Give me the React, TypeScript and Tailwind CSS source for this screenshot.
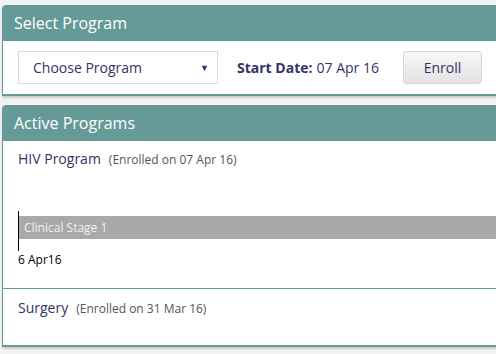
import React from "react";

export default function App() {
  const font = { fontFamily: '"Open Sans", "Noto Sans", sans-serif' };
  return (
    <div className="h-[354px] w-[496px] overflow-hidden bg-[#f3f3f3] pl-[2px] pt-[5px]" style={font}>
      {/* Select Program panel */}
      <div className="w-[520px] overflow-hidden rounded-tl-[4px] border-b-2 border-l border-[#669a98] bg-white shadow-[0_2px_2px_rgba(0,0,0,0.15)]">
        <div className="flex h-[36px] items-center bg-[#669a98] pl-[11px] text-[16px] text-white">
          Select Program
        </div>
        <div className="flex h-[53px] items-start pl-[15px] pt-[10px]">
          <div className="relative flex h-[33px] w-[200px] items-center border border-[#d9d9d9] bg-white pl-[14px] text-[14px] text-[#333366]">
            Choose Program
            <span className="absolute right-[8px] top-[9px] text-[9px] text-[#333366]">▼</span>
          </div>
          <div className="ml-[19px] flex h-[33px] items-center text-[14px] text-[#333366]">
            <span className="font-bold">Start Date:</span>
            <span className="ml-[4px]">07 Apr 16</span>
          </div>
          <div className="ml-[24px] flex h-[33px] w-[79px] items-center justify-center rounded-[3px] border border-[#d6d6d6] bg-gradient-to-b from-[#f8f8f8] to-[#e2e2e2] text-[14px] text-[#333366]">
            Enroll
          </div>
        </div>
      </div>

      {/* Active Programs panel */}
      <div className="mt-[9px] w-[520px] overflow-hidden rounded-tl-[4px] border-b-2 border-l border-[#669a98] bg-white shadow-[0_2px_2px_rgba(0,0,0,0.15)]">
        <div className="flex h-[36px] items-center bg-[#669a98] pl-[11px] text-[16px] text-white">
          Active Programs
        </div>
        <div className="h-[148px] border-b border-[#669a98] pl-[15px] pt-[7px]">
          <div className="flex items-baseline">
            <span className="text-[14px] text-[#333366]">HIV Program</span>
            <span className="ml-[8px] text-[12px] text-[#555]">(Enrolled on 07 Apr 16)</span>
          </div>
          <div className="relative mt-[42px] h-[40px]">
            <div className="absolute left-0 top-0 h-[40px] w-px bg-black" />
            <div className="absolute left-[1px] right-0 top-[5px] flex h-[23px] items-center bg-[#a9a9a9] pl-[5px] text-[12px] text-[#f0f0f0]">
              Clinical Stage 1
            </div>
          </div>
          <div className="text-[12px] text-black">6 Apr16</div>
        </div>
        <div className="h-[56px] pl-[15px] pt-[8px]">
          <div className="flex items-baseline">
            <span className="text-[14px] text-[#333366]">Surgery</span>
            <span className="ml-[8px] text-[12px] text-[#555]">(Enrolled on 31 Mar 16)</span>
          </div>
        </div>
      </div>
    </div>
  );
}
